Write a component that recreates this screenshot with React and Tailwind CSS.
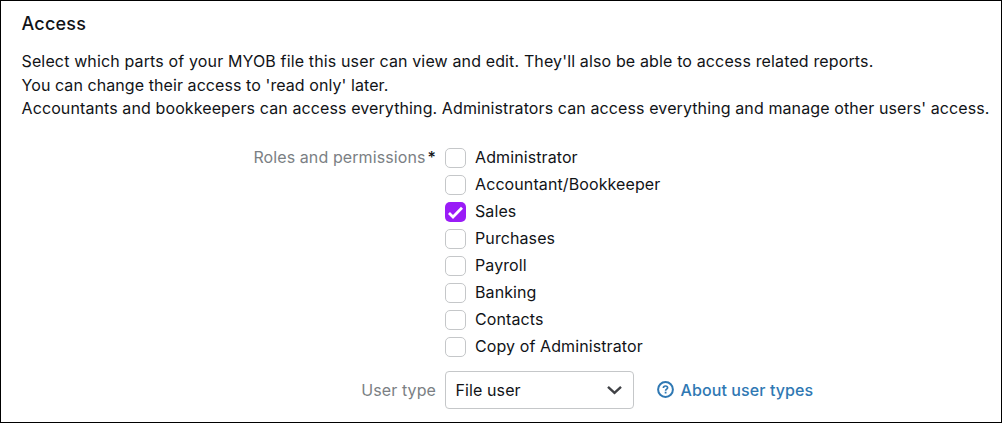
import { useState } from 'react';

const ROLES = [
  'Administrator',
  'Accountant/Bookkeeper',
  'Sales',
  'Purchases',
  'Payroll',
  'Banking',
  'Contacts',
  'Copy of Administrator',
];

export default function App() {
  const [selected, setSelected] = useState(['Sales']);

  const toggleRole = (role) =>
    setSelected(prev => prev.includes(role) ? prev.filter(r => r !== role) : [...prev, role]);

  return (
    <section className="h-[423px] w-[1002px] overflow-hidden border border-black bg-white pl-[20.5px] font-['Inter',sans-serif] text-[16px] tracking-[0.1px] text-[#111317]">
      {/* Heading */}
      <h2 className="pt-[11px] text-[18px] leading-6 font-medium tracking-[0.2px]">Access</h2>
      <div className="mt-[14px] leading-[23.5px] whitespace-nowrap">
        <p className="tracking-[0.138px]">Select which parts of your MYOB file this user can view and edit. They'll also be able to access related reports.</p>
        <p className="tracking-[0.075px]">You can change their access to 'read only' later.</p>
        <p className="tracking-[0.106px]">Accountants and bookkeepers can access everything. Administrators can access everything and manage other users' access.</p>
      </div>

      {/* Roles */}
      <div className="mt-[23px] flex">
        <div className="w-[423.5px] pr-[9px] text-right leading-[27px] text-[#7b7f84]">
          Roles and permissions<span className="ml-[2px] font-medium text-[#111317]">*</span>
        </div>
        <div className="flex flex-col">
          {ROLES.map(role => (
            <RoleOption
              key={role}
              label={role}
              checked={selected.includes(role)}
              onToggle={() => toggleRole(role)}
            />
          ))}
        </div>
      </div>

      {/* User type */}
      <div className="mt-[11px] flex h-[38px] items-center">
        <div className="w-[423.5px] pr-[9px] text-right text-[#7b7f84]">User type</div>
        <button className="flex h-[38px] w-[189px] items-center justify-between rounded-[4px] border border-[#c5c7c9] pr-[11px] pl-[9.5px]">
          <span>File user</span>
          <svg width="15" height="10" viewBox="0 0 15 10" fill="none" stroke="#404246" strokeWidth="2.4">
            <path d="M1 1.8l6.5 6L14 1.8" />
          </svg>
        </button>
        <a href="#" className="ml-[22.5px] flex items-center gap-[7px] font-medium text-[#2f78b3]">
          <svg width="17" height="17" viewBox="0 0 17 17" fill="none" stroke="currentColor">
            <circle cx="8.5" cy="8.5" r="7.4" strokeWidth="2" />
            <path d="M6.4 6.9c0-1.2.9-1.9 2.1-1.9s2.1.7 2.1 1.8c0 1.3-2 1.4-2 2.9" strokeWidth="1.7" />
            <path d="M7.7 11.6h1.8" strokeWidth="1.8" />
          </svg>
          <span>About user types</span>
        </a>
      </div>
    </section>
  );
}

function RoleOption({ label, checked, onToggle }) {
  return (
    <button role="checkbox" aria-checked={checked} onClick={onToggle} className="flex h-[27px] items-center gap-[9px]">
      <span
        className={
          checked
            ? 'mt-[2px] flex h-5 w-[21px] items-center justify-center rounded-[5px] bg-[#9a1cf7]'
            : 'mt-[2px] h-5 w-[21px] rounded-[5px] border border-[#c5c7c9] bg-white'
        }
      >
        {checked && (
          <svg width="15" height="13" viewBox="0 0 15 13" fill="none" stroke="#fff" strokeWidth="2.8">
            <path d="M1 7l4 4L14 1.8" />
          </svg>
        )}
      </span>
      <span>{label}</span>
    </button>
  );
}
